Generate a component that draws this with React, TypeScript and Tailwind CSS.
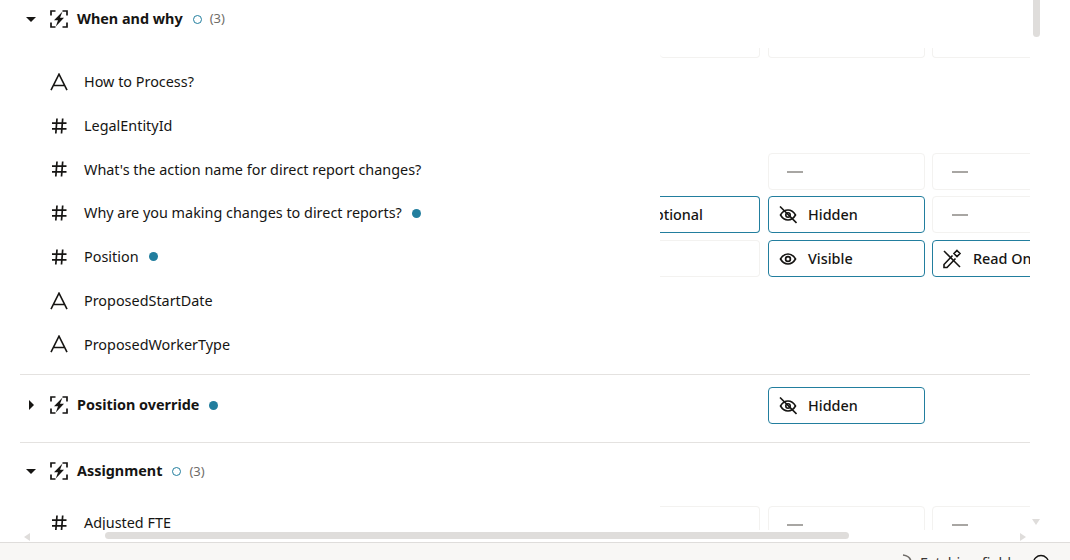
function Bolt() {
  return (
    <svg width="18" height="18" viewBox="0 0 18 18" fill="none" stroke="#161513" strokeWidth="1.7" className="shrink-0">
      <path d="M5.5 1H1V5.5M12.5 1H17V5.5M1 12.5V17H5.5M17 12.5V17H12.5" />
      <path d="M12.5 1.5L4 10.2H8L5.8 16.5L14 7.8H10Z" fill="#161513" stroke="none" />
    </svg>
  );
}
function LetterA() {
  return (
    <svg width="18" height="18" viewBox="0 0 18 18" fill="none" stroke="#161513" strokeWidth="1.6" className="shrink-0">
      <path d="M1 17.2L9 1.2L17 17.2M4 12.5H14" />
    </svg>
  );
}
function Hash() {
  return (
    <svg width="18" height="18" viewBox="0 0 18 18" fill="none" stroke="#161513" strokeWidth="1.7" className="shrink-0">
      <path d="M2 6.2H16.5M2 11.8H16.5M7 1.5L5.8 16.5M12.7 1.5L11.5 16.5" />
    </svg>
  );
}
function Eye() {
  return (
    <svg width="18" height="18" viewBox="0 0 18 18" fill="none" stroke="#161513" strokeWidth="1.7" className="shrink-0">
      <path d="M1.5 9C3.5 5.6 6 4 9 4S14.5 5.6 16.5 9C14.5 12.4 12 14 9 14S3.5 12.4 1.5 9Z" />
      <circle cx="9" cy="9" r="2.4" />
    </svg>
  );
}
function EyeOff() {
  return (
    <svg width="18" height="18" viewBox="0 0 18 18" fill="none" stroke="#161513" strokeWidth="1.6" className="shrink-0">
      <path d="M1.5 9C3.5 5.6 6 4 9 4S14.5 5.6 16.5 9C14.5 12.4 12 14 9 14S3.5 12.4 1.5 9Z" />
      <circle cx="9" cy="9" r="2.2" />
      <path d="M1 0.5L17.5 17" />
    </svg>
  );
}
function ReadOnly() {
  return (
    <svg width="20" height="20" viewBox="0 0 20 20" fill="none" stroke="#161513" strokeWidth="1.6" className="shrink-0">
      <path d="M2 2L18 18" />
      <path d="M10.5 6.5L2 15.5V18.5H5L13.5 9.5" />
      <path d="M15 1.5L18 4.5L15 7.5L12 4.5Z" />
    </svg>
  );
}

function Caret({ open }: { open: boolean }) {
  return open ? (
    <span className="w-0 h-0 border-x-[5.5px] border-x-transparent border-t-[5.5px] border-t-[#161513]" />
  ) : (
    <span className="mr-[2px] w-0 h-0 border-y-[5.5px] border-y-transparent border-l-[5.5px] border-l-[#161513]" />
  );
}

function Header({ title, open, count, dot }: { title: string; open: boolean; count?: boolean; dot?: boolean }) {
  return (
    <div className="flex items-center h-[38px] shrink-0">
      <div className="w-[50px] flex justify-end pr-[14px]"><Caret open={open} /></div>
      <Bolt />
      <span className="ml-[9px] text-[14.4px] font-bold text-[#161513]">{title}</span>
      {dot && <span className="ml-[10px] w-[9px] h-[9px] rounded-full bg-[#227e9e]" />}
      {count && <span className="ml-[10px] w-[9px] h-[9px] rounded-full border border-[#227e9e]" />}
      {count && <span className="ml-[8px] text-[13px] text-[#6f6c68]">(3)</span>}
    </div>
  );
}

function Active({ icon, label, className }: { icon?: React.ReactNode; label: string; className: string }) {
  return (
    <div className={`h-[37px] shrink-0 rounded-[4px] border border-[#227e9e] bg-white flex items-center gap-[11px] text-[14.4px] font-medium text-[#161513] whitespace-nowrap overflow-hidden ${className}`}>
      {icon}
      <span>{label}</span>
    </div>
  );
}

function Empty({ className, dash = true }: { className: string; dash?: boolean }) {
  return (
    <div className={`h-[37px] shrink-0 rounded-[4px] border border-[#f3f2f0] bg-white flex items-center ${className}`}>
      {dash && <span className="mt-[1px] w-[16px] h-[2px] bg-[#a8a6a3]" />}
    </div>
  );
}

function Row({ icon, label, dot, children }: { icon: React.ReactNode; label: string; dot?: boolean; children?: React.ReactNode }) {
  return (
    <div className="flex h-[43.75px] shrink-0">
      <div className="w-[660px] shrink-0 flex items-center h-[43.75px] pl-[50px]">
        {icon}
        <span className="ml-[16px] text-[14.4px] text-[#161513]">{label}</span>
        {dot && <span className="ml-[10px] w-[9px] h-[9px] rounded-full bg-[#227e9e]" />}
      </div>
      <div className="flex pt-[5px] w-[370px] overflow-hidden">{children}</div>
    </div>
  );
}

export default function App() {
  return (
    <div className="w-[1070px] h-[560px] overflow-hidden bg-white flex flex-col" style={{ fontFamily: '"Noto Sans", sans-serif' }}>
      <div className="relative h-[543px] shrink-0 border-b border-[#dfdddb]">
        <div className="h-[530px] overflow-hidden">
          <Header title="When and why" open count />
          <div className="h-[20px] flex pt-[10px]">
            <div className="w-[660px] shrink-0" />
            <div className="w-[100px] h-[10px] rounded-b-[4px] border-r border-b border-[#f3f2f0]" />
            <div className="ml-[8px] w-[157px] h-[10px] rounded-b-[4px] border-x border-b border-[#f3f2f0]" />
            <div className="ml-[7px] w-[98px] h-[10px] rounded-bl-[4px] border-l border-b border-[#f3f2f0]" />
          </div>
          <div className="h-[2px]" />
          <Row icon={<LetterA />} label="How to Process?" />
          <Row icon={<Hash />} label="LegalEntityId" />
          <Row icon={<Hash />} label="What's the action name for direct report changes?">
            <div className="w-[108px] shrink-0" />
            <Empty className="w-[157px] mr-[7px] pl-[18px]" />
            <Empty className="w-[157px] pl-[19px]" />
          </Row>
          <Row icon={<Hash />} label="Why are you making changes to direct reports?" dot>
            <div className="w-[100px] h-[37px] shrink-0 rounded-r-[4px] border-y border-r border-[#227e9e] mr-[8px] flex items-center justify-end pr-[56px] text-[14.4px] font-medium text-[#161513] overflow-hidden whitespace-nowrap">ptional</div>
            <Active icon={<EyeOff />} label="Hidden" className="w-[157px] mr-[7px] pl-[10px]" />
            <Empty className="w-[157px] pl-[19px]" />
          </Row>
          <Row icon={<Hash />} label="Position" dot>
            <div className="w-[100px] h-[37px] shrink-0 rounded-r-[4px] border-y border-r border-[#f3f2f0] mr-[8px]" />
            <Active icon={<Eye />} label="Visible" className="w-[157px] mr-[7px] pl-[10px]" />
            <Active icon={<ReadOnly />} label="Read Only" className="w-[157px] pl-[9px]" />
          </Row>
          <Row icon={<LetterA />} label="ProposedStartDate" />
          <Row icon={<LetterA />} label="ProposedWorkerType" />
          <div className="h-[8px]" />
          <div className="ml-[20px] w-[1010px] border-t border-[#e4e2e0]" />
          <div className="flex h-[67px]">
            <div className="w-[660px] shrink-0 pt-[11px]">
              <Header title="Position override" open={false} dot />
            </div>
            <div className="pt-[12px] pl-[108px]">
              <Active icon={<EyeOff />} label="Hidden" className="w-[157px] pl-[10px]" />
            </div>
          </div>
          <div className="ml-[20px] w-[1010px] border-t border-[#e4e2e0]" />
          <div className="pt-[9px]">
            <Header title="Assignment" open count />
          </div>
          <div className="h-[10.5px]" />
          <Row icon={<Hash />} label="Adjusted FTE">
            <div className="w-[100px] h-[37px] shrink-0 rounded-r-[4px] border-y border-r border-[#f3f2f0] mr-[8px]" />
            <Empty className="w-[157px] mr-[7px] pl-[18px]" />
            <Empty className="w-[157px] pl-[19px]" />
          </Row>
        </div>
        <div className="absolute left-[105px] top-[532px] w-[744px] h-[7px] rounded-full bg-[#dfdddb]" />
        <div className="absolute left-[24px] top-[533px] w-0 h-0 border-y-[4px] border-y-transparent border-r-[6px] border-r-[#dfdddb]" />
        <div className="absolute left-[1020px] top-[533px] w-0 h-0 border-y-[4px] border-y-transparent border-l-[6px] border-l-[#dfdddb]" />
        <div className="absolute left-[1033px] top-0 w-[7px] h-[37px] rounded-b-full bg-[#dfdddb]" />
        <div className="absolute left-[1032px] top-[519px] w-0 h-0 border-x-[4px] border-x-transparent border-t-[6px] border-t-[#dfdddb]" />
      </div>
      <div className="flex-1 bg-[#f8f7f5] flex items-start overflow-hidden pt-[9px] pl-[902px] text-[14.4px] text-[#3a3835]">
        <svg width="16" height="16" viewBox="0 0 16 16" fill="none" stroke="#6f6c68" strokeWidth="1.7" className="mt-[2px] shrink-0">
          <path d="M1 1C5 1.5 8.5 3.5 9 8" />
        </svg>
        <span className="ml-[2px] whitespace-nowrap">Fetching fields</span>
        <svg width="18" height="18" viewBox="0 0 18 18" fill="none" stroke="#161513" strokeWidth="1.4" className="ml-[14px] mt-[2px] shrink-0">
          <circle cx="9" cy="9" r="7.5" />
        </svg>
      </div>
    </div>
  );
}
